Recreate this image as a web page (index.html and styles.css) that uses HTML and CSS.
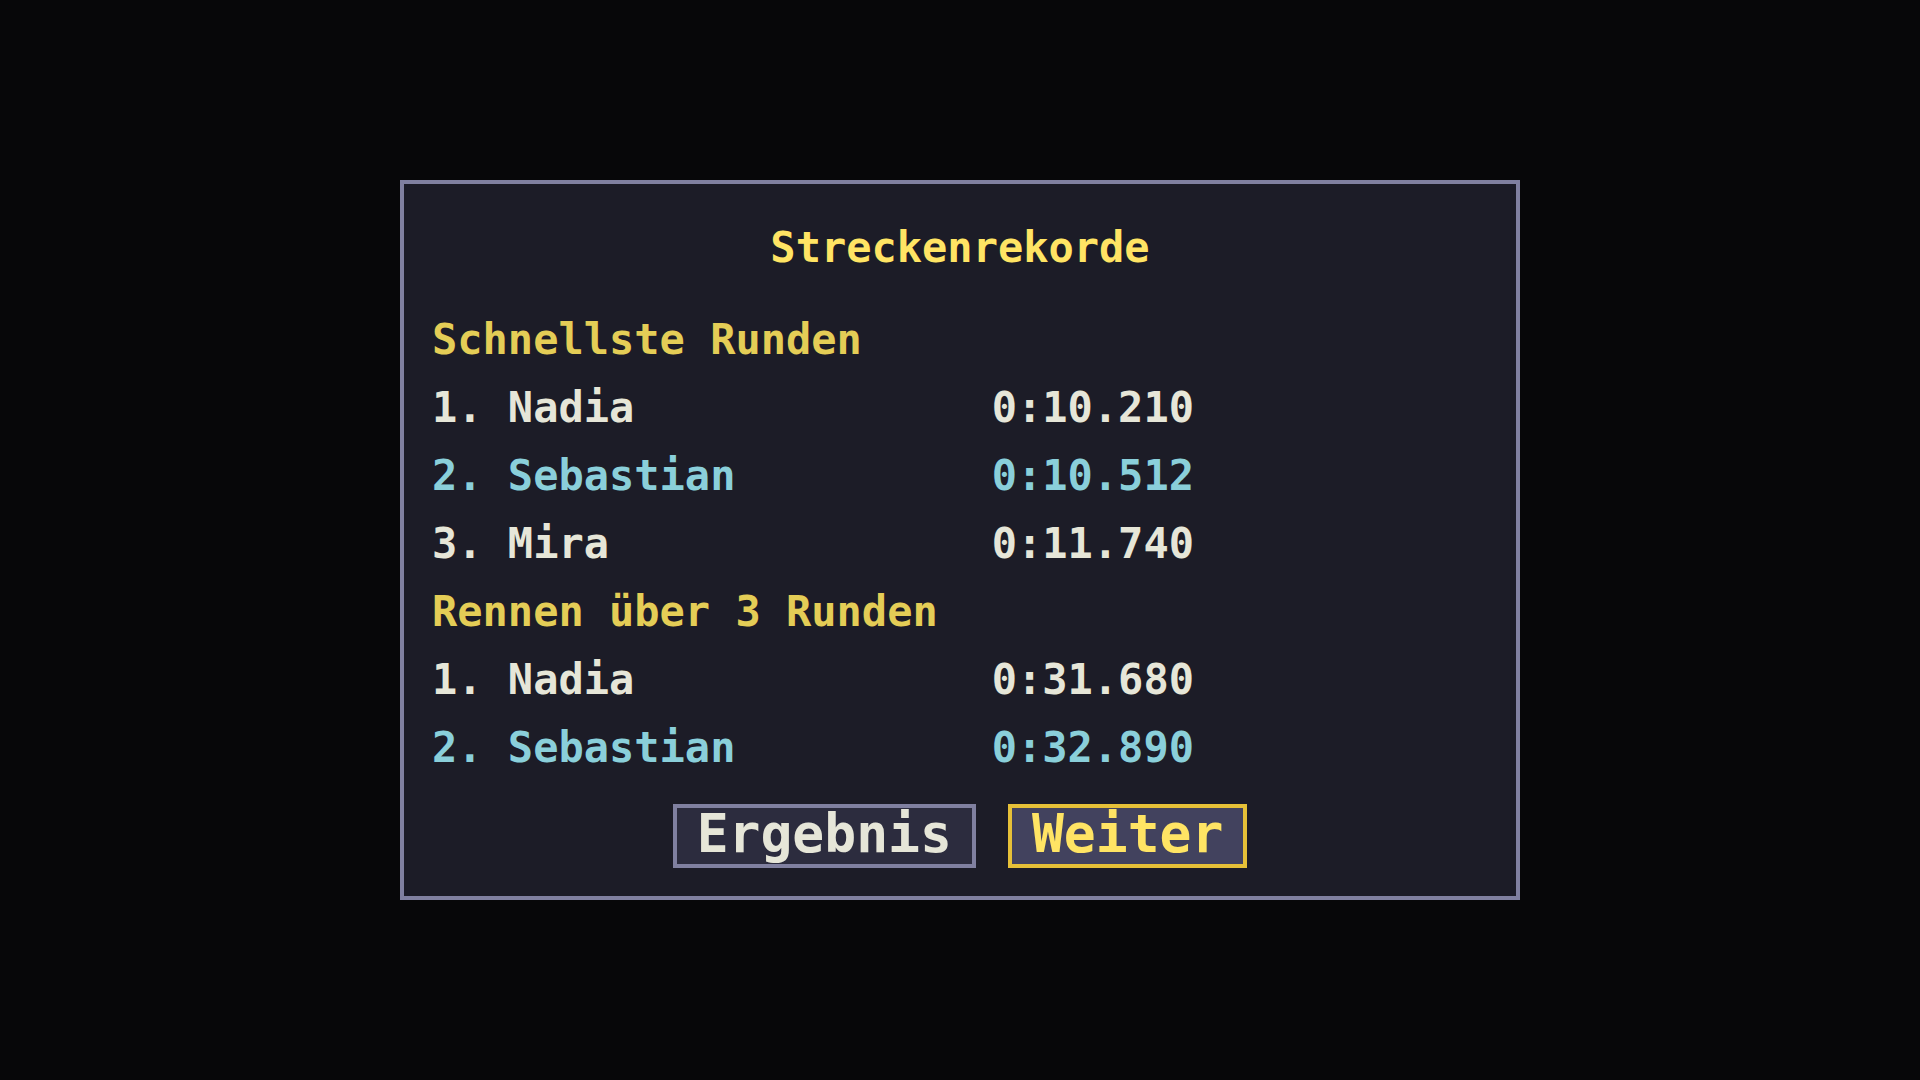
FILE: index.html
```
<!DOCTYPE html>
<html lang="de">
<head>
<meta charset="utf-8">
<title>Streckenrekorde</title>
<link rel="stylesheet" href="styles.css">
</head>
<body>
<main class="dialog">
  <h1 class="title">Streckenrekorde</h1>
  <table class="records">
    <colgroup>
      <col class="name-column">
      <col>
    </colgroup>
    <tbody>
      <tr><th class="group" colspan="2" scope="rowgroup">Schnellste Runden</th></tr>
      <tr><td>1. Nadia</td><td>0:10.210</td></tr>
      <tr class="own"><td>2. Sebastian</td><td>0:10.512</td></tr>
      <tr><td>3. Mira</td><td>0:11.740</td></tr>
    </tbody>
    <tbody>
      <tr><th class="group" colspan="2" scope="rowgroup">Rennen über 3 Runden</th></tr>
      <tr><td>1. Nadia</td><td>0:31.680</td></tr>
      <tr class="own"><td>2. Sebastian</td><td>0:32.890</td></tr>
    </tbody>
  </table>
  <div class="actions">
    <button class="button" type="button">Ergebnis</button>
    <button class="button selected" type="button">Weiter</button>
  </div>
</main>
</body>
</html>
```
FILE: styles.css
```
* {
  box-sizing: border-box;
}

body {
  margin: 0;
  min-height: 100vh;
  display: flex;
  align-items: center;
  justify-content: center;
  background: #070709;
  color: #e6e6d8;
  font-family: "DejaVu Sans Mono", "Liberation Mono", monospace;
  font-size: 42px;
  font-weight: bold;
}

.dialog {
  width: 100%;
  max-width: 1120px;
  padding: 28px;
  background: #1c1c27;
  border: 4px solid #8080a0;
}

.title {
  margin: 0 0 22px;
  color: #ffe464;
  font-size: 42px;
  line-height: 72px;
  text-align: center;
}

.records {
  width: 100%;
  border-collapse: collapse;
  table-layout: fixed;
}

.name-column {
  width: 53%;
}

.records td,
.records th {
  padding: 0;
  height: 68px;
  line-height: 68px;
  text-align: left;
}

.records .group {
  color: #e4cd56;
}

.own {
  color: #8acfda;
}

.actions {
  display: flex;
  justify-content: center;
  gap: 32px;
  margin-top: 22px;
}

.button {
  height: 64px;
  padding: 0 20px 4px;
  background: #2c2c3e;
  border: 4px solid #8080a0;
  color: #e6e6d8;
  font: bold 53px/52px "DejaVu Sans Mono", "Liberation Mono", monospace;
}

.button.selected {
  background: #42425e;
  border-color: #e6c038;
  color: #ffe464;
}
```
